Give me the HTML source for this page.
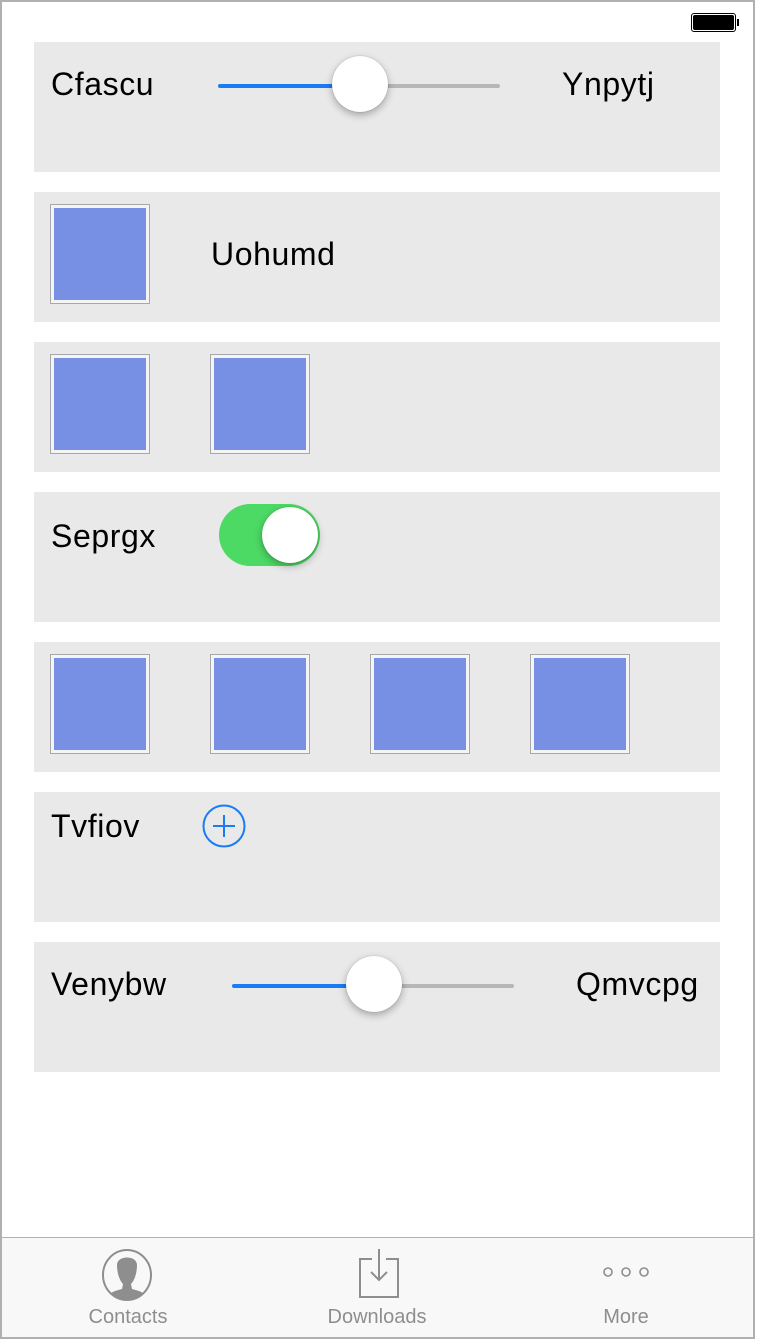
<!DOCTYPE html>
<html><head><style>
*{margin:0;padding:0;box-sizing:border-box}
body{width:760px;height:1340px;background:#fff;font-family:"Liberation Sans",sans-serif;position:relative;overflow:hidden}
.frame{position:absolute;left:0;top:0;width:755px;height:1339px;border:2px solid #b0b0b0}
.p{position:absolute;left:34px;width:686px;height:130px;background:#e9e9e9}
.t{position:absolute;font-size:32px;color:#000;line-height:36px;letter-spacing:0.6px}
.sq{position:absolute;width:100px;height:100px;border:1px solid #a8a8a8;background:#f4f4f4;padding:3px}
.sq div{width:100%;height:100%;background:#7890e3}
.tr{position:absolute;height:4px;border-radius:2px}
.th{position:absolute;width:56px;height:56px;border-radius:50%;background:#fff;box-shadow:0 3px 8px rgba(0,0,0,.3),0 0 1px rgba(0,0,0,.3)}
.tab{position:absolute;left:2px;top:1237px;width:751px;height:100px;background:#f8f8f8;border-top:1px solid #b0b0b0}
.lb{position:absolute;font-size:20px;color:#8e8e8e;top:68px;width:160px;text-align:center}
</style></head><body>
<div class="frame"></div>
<div style="position:absolute;left:691px;top:13px;width:45px;height:19px;border:1px solid #000;border-radius:3px;padding:1px"><div style="width:100%;height:100%;background:#000;border-radius:2px"></div></div>
<div style="position:absolute;left:737px;top:19px;width:2px;height:7px;background:#000"></div>

<div class="p" style="top:42px"></div>
<div class="t" style="left:51px;top:66px">Cfascu</div>
<div class="tr" style="left:218px;top:84px;width:142px;background:#1a7cf5"></div>
<div class="tr" style="left:360px;top:84px;width:140px;background:#b7b7b7"></div>
<div class="th" style="left:332px;top:56px"></div>
<div class="t" style="left:562px;top:66px">Ynpytj</div>

<div class="p" style="top:192px"></div>
<div class="sq" style="left:50px;top:204px"><div></div></div>
<div class="t" style="left:211px;top:236px">Uohumd</div>

<div class="p" style="top:342px"></div>
<div class="sq" style="left:50px;top:354px"><div></div></div>
<div class="sq" style="left:210px;top:354px"><div></div></div>

<div class="p" style="top:492px"></div>
<div class="t" style="left:51px;top:518px">Seprgx</div>
<div style="position:absolute;left:219px;top:504px;width:101px;height:62px;border-radius:31px;background:#4cd964"></div>
<div class="th" style="left:262px;top:507px;width:56px;height:56px"></div>

<div class="p" style="top:642px"></div>
<div class="sq" style="left:50px;top:654px"><div></div></div>
<div class="sq" style="left:210px;top:654px"><div></div></div>
<div class="sq" style="left:370px;top:654px"><div></div></div>
<div class="sq" style="left:530px;top:654px"><div></div></div>

<div class="p" style="top:792px"></div>
<div class="t" style="left:51px;top:808px">Tvfiov</div>
<svg style="position:absolute;left:202px;top:804px" width="44" height="44" viewBox="0 0 44 44"><circle cx="22" cy="22" r="20.5" fill="none" stroke="#1a7cf5" stroke-width="2"/><path d="M22 11V33M11 22H33" stroke="#1a7cf5" stroke-width="2"/></svg>

<div class="p" style="top:942px"></div>
<div class="t" style="left:51px;top:966px">Venybw</div>
<div class="tr" style="left:232px;top:984px;width:142px;background:#1a7cf5"></div>
<div class="tr" style="left:374px;top:984px;width:140px;background:#b7b7b7"></div>
<div class="th" style="left:346px;top:956px"></div>
<div class="t" style="left:576px;top:966px">Qmvcpg</div>

<div class="tab">
<svg style="position:absolute;left:98px;top:10px" width="54" height="56" viewBox="0 0 54 56"><defs><clipPath id="c"><ellipse cx="27" cy="27" rx="24" ry="25"/></clipPath></defs><ellipse cx="27" cy="27" rx="24" ry="25" fill="none" stroke="#8e8e8e" stroke-width="2"/><g clip-path="url(#c)" fill="#8e8e8e"><path d="M17 17C17 7 37 7 37 17C37 26 34 33 31 36L32 41C40 43 47 45 49 54H5C7 45 14 43 22 41L23 36C20 33 17 26 17 17Z"/></g></svg>
<svg style="position:absolute;left:357px;top:10px" width="40" height="50" viewBox="0 0 40 50"><path d="M13 11H1V49H39V11H27" fill="none" stroke="#8e8e8e" stroke-width="2"/><path d="M20 1V32M12 24L20 32L28 24" fill="none" stroke="#8e8e8e" stroke-width="2"/></svg>
<svg style="position:absolute;left:600px;top:27px" width="50" height="14" viewBox="0 0 50 14"><circle cx="6" cy="7" r="4" fill="none" stroke="#8e8e8e" stroke-width="1.6"/><circle cx="24" cy="7" r="4" fill="none" stroke="#8e8e8e" stroke-width="1.6"/><circle cx="42" cy="7" r="4" fill="none" stroke="#8e8e8e" stroke-width="1.6"/></svg>
<div class="lb" style="left:46px">Contacts</div>
<div class="lb" style="left:295px">Downloads</div>
<div class="lb" style="left:544px">More</div>
</div>
</body></html>
